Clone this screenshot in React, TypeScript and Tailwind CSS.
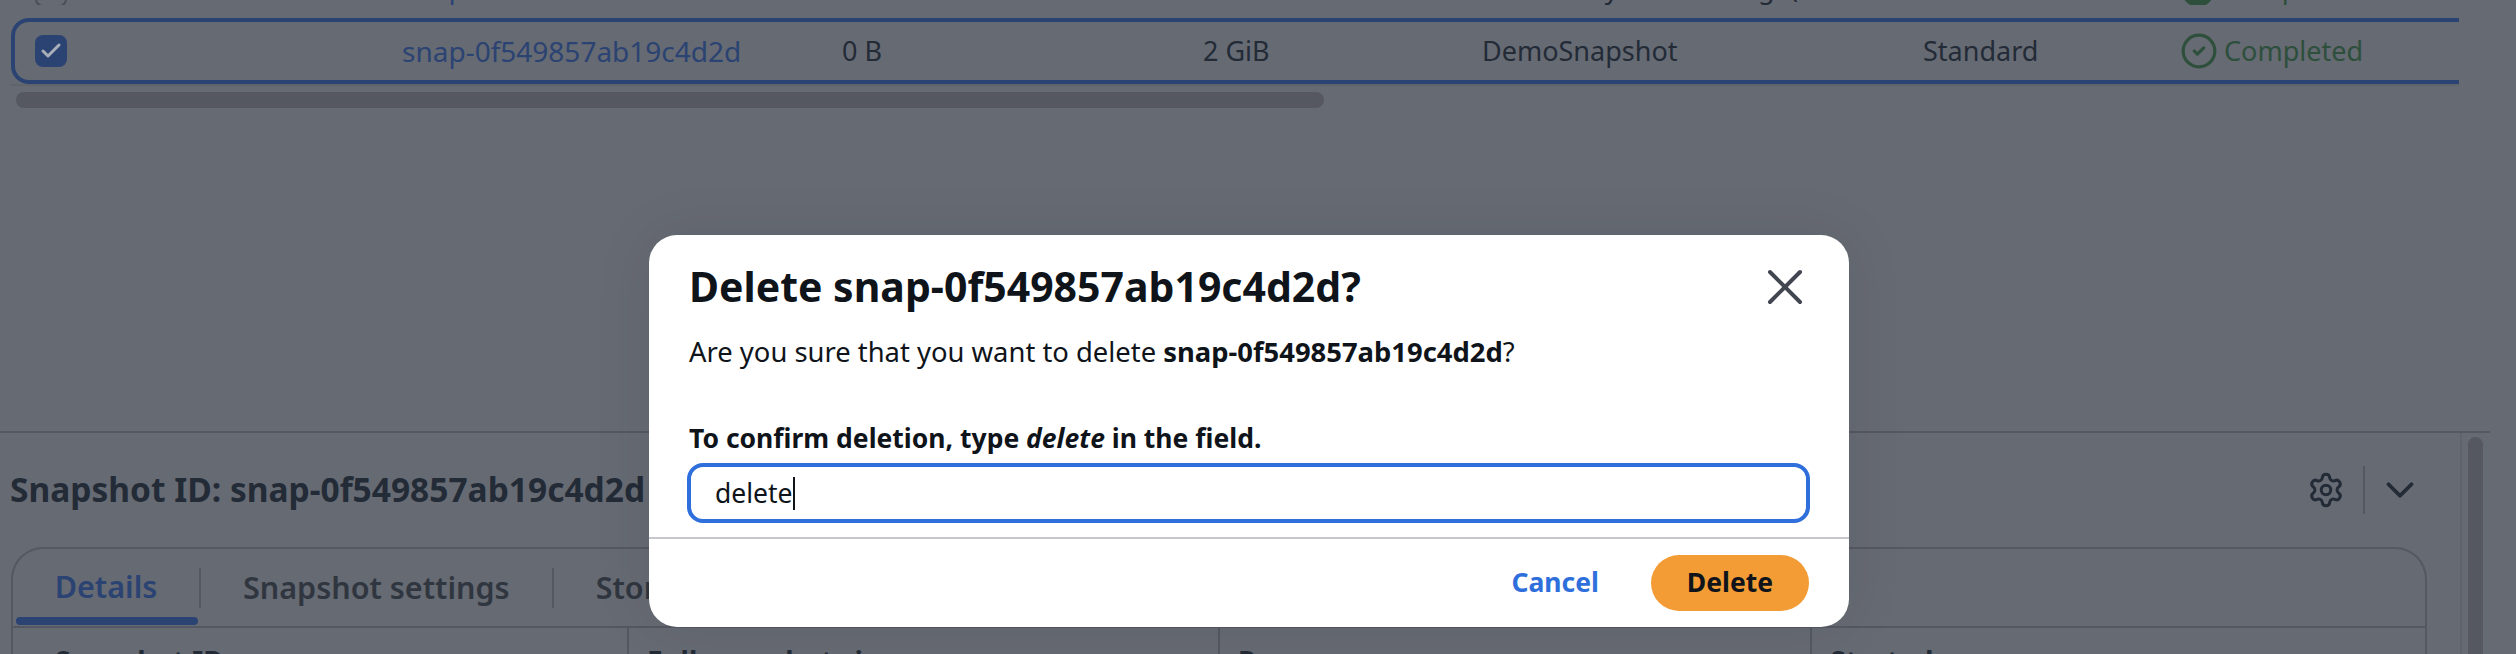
import { Check, ChevronDown, CircleCheck, Settings, X } from "lucide-react"

const tabs = ["Snapshot settings", "Storage tier", "Tags"]

const App = () => {
  return (
    <div className="relative h-[654px] w-[2516px] overflow-hidden bg-[#666a73] font-['Noto_Sans',sans-serif] text-[#232b37]">
      {/* table */}
      <div className="h-[431px] pl-[11px] pr-[57px]">
        {/* previous row, only its descenders are on screen */}
        <div className="flex h-[5px] items-end overflow-hidden text-[27px] leading-[1.3] whitespace-nowrap">
          <span className="ml-6 h-8 w-8 shrink-0 translate-y-[2px] rounded-lg border-2 border-[#4a4e58]" />
          <span className="ml-[335px] w-[440px] shrink-0 text-[28px] text-[#2b4372]">snap-0</span>
          <span className="w-[361px] shrink-0" />
          <span className="w-[279px] shrink-0" />
          <span className="w-[441px] shrink-0 overflow-hidden">Created by CreateImage(i</span>
          <span className="w-[256px] shrink-0" />
          <span className="flex shrink-0 items-end gap-1 text-[#2d4f3c]">
            <span className="h-8 w-8 translate-x-[3px] translate-y-[2px] rounded-full bg-[#2d4f3c]" />
            <span className="ml-[8px]">Completed</span>
          </span>
        </div>

        <div className="mt-[13px] flex h-[66px] items-center rounded-l-[18px] border-y-4 border-l-4 border-[#2b4372] text-[27px]">
          <span className="ml-5 flex h-8 w-8 shrink-0 items-center justify-center rounded-lg bg-[#2b4372]">
            <Check className="h-6 w-6 text-[#a9aeb8]" strokeWidth={3} />
          </span>
          <span className="ml-[335px] w-[440px] shrink-0 text-[28px] text-[#2b4372]">snap-0f549857ab19c4d2d</span>
          <span className="w-[361px] shrink-0">0 B</span>
          <span className="w-[279px] shrink-0">2 GiB</span>
          <span className="w-[441px] shrink-0">DemoSnapshot</span>
          <span className="w-[257px] shrink-0">Standard</span>
          <span className="flex items-center gap-1.5 text-[#2d4f3c]">
            <CircleCheck className="h-[38px] w-[38px]" strokeWidth={2} />
            Completed
          </span>
        </div>
        <div className="h-0.5 bg-[#5f636c]" />
        <div className="ml-[5px] mt-1.5 h-4 w-[1308px] rounded-lg bg-[#555861]" />
      </div>

      {/* split panel */}
      <div className="mr-[26px] flex h-[223px] border-t-2 border-[#545862]">
        <div className="min-w-0 flex-1 pl-[11px] pr-[33px]">
          <div className="flex h-[114px] items-center">
            <h2 className="ml-[-1px] w-[2297px] shrink-0 pb-[2px] text-[33.5px] font-bold whitespace-nowrap">
              Snapshot ID: snap-0f549857ab19c4d2d
            </h2>
            <Settings className="h-[38px] w-[38px] shrink-0" strokeWidth={1.9} />
            <span className="ml-[18px] h-12 w-0.5 shrink-0 bg-[#545862]" />
            <ChevronDown className="ml-3 h-[46px] w-[46px] shrink-0" strokeWidth={2} />
          </div>
          <div className="h-[200px] rounded-t-[32px] border-x-2 border-t-2 border-[#545862]">
            <div className="flex h-[79px] items-center border-b-2 border-[#545862] text-[30.5px] font-semibold">
              <div className="flex h-full w-[186px] shrink-0 flex-col text-[#2b4372]">
                <span className="flex flex-1 items-center justify-center pt-[7px]">Details</span>
                <span className="mb-px ml-[3px] h-2 w-[182px] rounded-md bg-[#2b4372]" />
              </div>
              {tabs.map((tab) => (
                <div key={tab} className="flex items-center whitespace-nowrap text-[#30363f]">
                  <span className="h-10 w-0.5 bg-[#545862]" />
                  <span className="px-[42px]">{tab}</span>
                </div>
              ))}
            </div>
            <div className="grid grid-cols-[614px_591px_592px_1fr] text-[28px] font-bold leading-9">
              <div className="h-24 pl-[42px] pt-[15px]">Snapshot ID</div>
              <div className="h-24 border-l-2 border-[#545862] pl-[18px] pt-[15px]">Full snapshot size</div>
              <div className="h-24 border-l-2 border-[#545862] pl-[18px] pt-[15px]">Progress</div>
              <div className="h-24 border-l-2 border-[#545862] pl-[18px] pt-[15px]">Started</div>
            </div>
          </div>
        </div>
        <div className="w-[30px] border-l-2 border-[#5f636c] pl-1.5">
          <div className="mt-1 h-full w-[15px] rounded-t-lg bg-[#555861]" />
        </div>
      </div>

      {/* modal */}
      <div className="absolute left-[649px] top-[235px] flex h-[392px] w-[1200px] flex-col rounded-[28px] bg-white text-[#0f141a] shadow-[0_0_60px_rgba(0,0,0,0.08)]">
        <div className="flex-1 px-10">
          <div className="flex items-start justify-between pt-7">
            <h1 className="text-[41px] font-bold leading-[46px]">Delete snap-0f549857ab19c4d2d?</h1>
            <span className="flex h-12 w-12 items-center justify-center">
              <X className="h-[60px] w-[60px] shrink-0 text-[#424650]" strokeWidth={1.6} />
            </span>
          </div>
          <p className="mt-[23px] text-[27.4px] leading-9">
            Are you sure that you want to delete <b>snap-0f549857ab19c4d2d</b>?
          </p>
          <p className="mt-[50px] text-[26.5px] font-bold leading-9">
            To confirm deletion, type <i>delete</i> in the field.
          </p>
          <div className="ml-[-2px] mr-[-1px] mt-[7px] flex h-[60px] items-center rounded-2xl border-4 border-[#2f6fdc] pl-6 text-[26.5px]">
            <span className="pt-[2px]">delete</span>
            <span className="h-[33px] w-0.5 bg-[#0f141a]" />
          </div>
        </div>
        <div className="flex h-[90px] items-center justify-end border-t-2 border-[#c6c6cd] pr-10 text-[26.5px] font-bold">
          <span className="text-[#2f6fdc]">Cancel</span>
          <span className="ml-[52px] flex h-14 w-[158px] items-center justify-center rounded-full bg-[#f39c36]">Delete</span>
        </div>
      </div>
    </div>
  )
}

export default App
